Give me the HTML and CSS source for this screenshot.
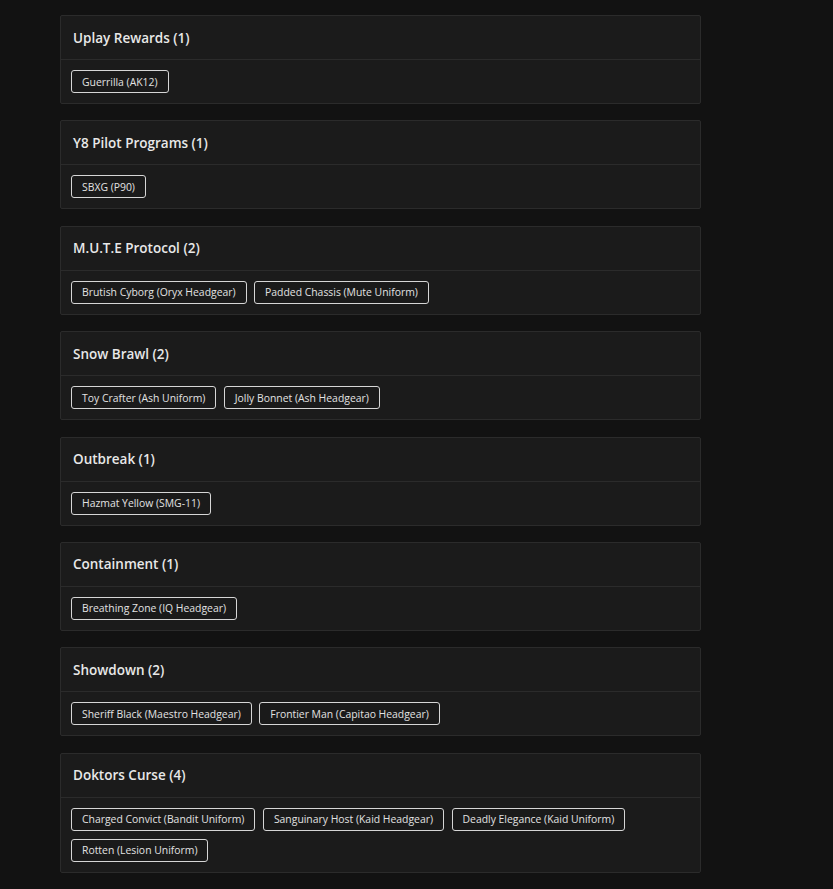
FILE: index.html
```html
<!DOCTYPE html>
<html>
<head>
<meta charset="utf-8">
<link rel="stylesheet" href="styles.css">
</head>
<body>
<div class="list">
  <section class="card">
    <h2 class="card-title">Uplay Rewards (1)</h2>
    <div class="tags"><span class="tag">Guerrilla (AK12)</span></div>
  </section>
  <section class="card">
    <h2 class="card-title">Y8 Pilot Programs (1)</h2>
    <div class="tags"><span class="tag">SBXG (P90)</span></div>
  </section>
  <section class="card">
    <h2 class="card-title">M.U.T.E Protocol (2)</h2>
    <div class="tags"><span class="tag">Brutish Cyborg (Oryx Headgear)</span><span class="tag">Padded Chassis (Mute Uniform)</span></div>
  </section>
  <section class="card">
    <h2 class="card-title">Snow Brawl (2)</h2>
    <div class="tags"><span class="tag">Toy Crafter (Ash Uniform)</span><span class="tag">Jolly Bonnet (Ash Headgear)</span></div>
  </section>
  <section class="card">
    <h2 class="card-title">Outbreak (1)</h2>
    <div class="tags"><span class="tag">Hazmat Yellow (SMG-11)</span></div>
  </section>
  <section class="card">
    <h2 class="card-title">Containment (1)</h2>
    <div class="tags"><span class="tag">Breathing Zone (IQ Headgear)</span></div>
  </section>
  <section class="card">
    <h2 class="card-title">Showdown (2)</h2>
    <div class="tags"><span class="tag">Sheriff Black (Maestro Headgear)</span><span class="tag">Frontier Man (Capitao Headgear)</span></div>
  </section>
  <section class="card">
    <h2 class="card-title">Doktors Curse (4)</h2>
    <div class="tags"><span class="tag">Charged Convict (Bandit Uniform)</span><span class="tag">Sanguinary Host (Kaid Headgear)</span><span class="tag">Deadly Elegance (Kaid Uniform)</span><span class="tag">Rotten (Lesion Uniform)</span></div>
  </section>
</div>
</body>
</html>
```
FILE: styles.css
```css
html, body {
  margin: 0;
  padding: 0;
  background: #121212;
}
body {
  font-family: "Open Sans", "DejaVu Sans", sans-serif;
  color: #e6e6e6;
}
.list {
  width: 641px;
  margin-left: 60px;
  padding-top: 15px;
  display: flex;
  flex-direction: column;
  gap: 16.4px;
}
.card {
  background: #1b1b1b;
  border: 1px solid #2b2b2b;
  border-radius: 2px;
}
.card-title {
  margin: 0;
  height: 43px;
  display: flex;
  align-items: center;
  padding: 0 12px;
  font-size: 13.5px;
  font-weight: 600;
  color: #e8e8e8;
  border-bottom: 1px solid #2b2b2b;
}
.tags {
  padding: 10px;
  display: flex;
  flex-wrap: wrap;
  gap: 8px 7.5px;
}
.tag {
  height: 23px;
  box-sizing: border-box;
  display: inline-flex;
  align-items: center;
  padding: 0 10px;
  border: 1px solid #d6d6d6;
  border-radius: 3px;
  font-size: 10.4px;
  color: #e2e2e2;
  background: #1a1a1a;
}
```
